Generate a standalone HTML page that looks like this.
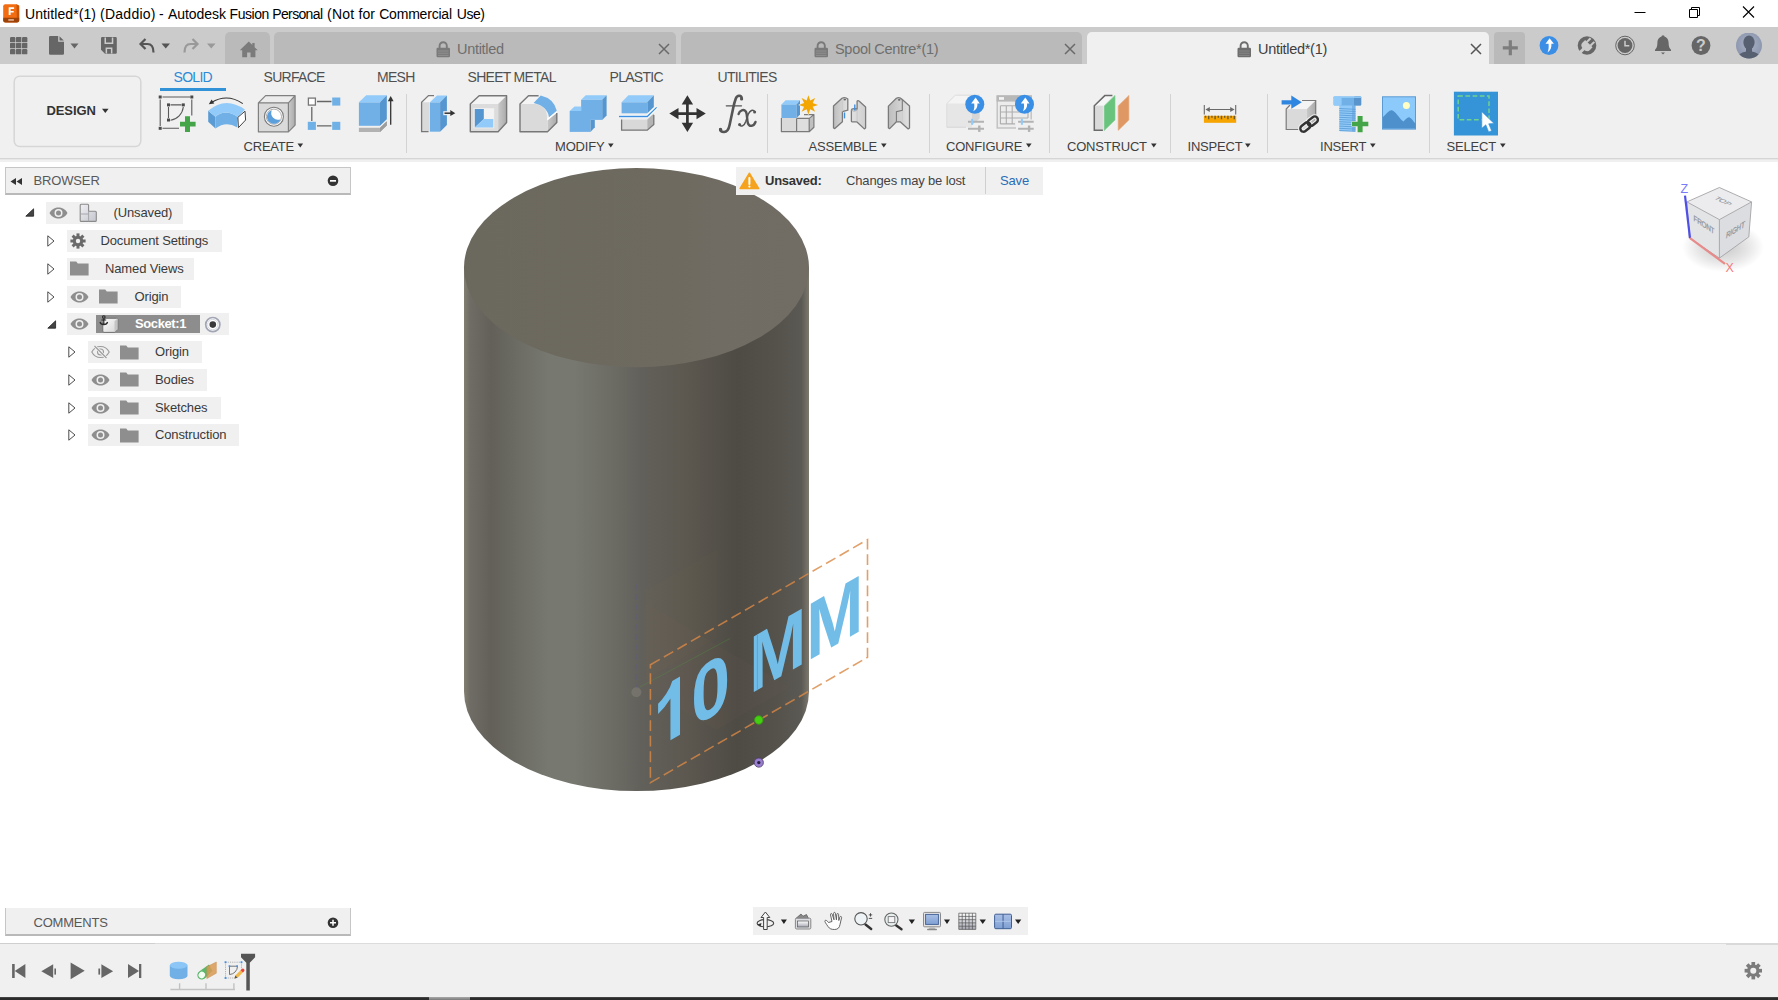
<!DOCTYPE html>
<html><head><meta charset="utf-8">
<style>
*{box-sizing:border-box;margin:0;padding:0}
html,body{width:1778px;height:1000px;overflow:hidden;background:#fff;font-family:"Liberation Sans",sans-serif;}
.abs{position:absolute}
#titlebar{position:absolute;left:0;top:0;width:1778px;height:27px;background:#fff}
#title{position:absolute;left:25px;top:6px;font-size:14px;color:#000;white-space:nowrap}
#title span{position:absolute;top:0;white-space:nowrap}
#tabbar{position:absolute;left:0;top:27px;width:1778px;height:37px;background:#cbcbcb}
.tab{position:absolute;top:4.500px;height:32.500px;border-radius:5px 5px 0 0;background:#bababa;font-size:14px;color:#6b6b6b;white-space:nowrap}
.tab.active{background:#f0f0f0;color:#3c3c3c}
#toolbar{position:absolute;left:0;top:64px;width:1778px;height:98px;background:#f0f0f0}
#toolbar .line{position:absolute;left:0;top:94px;width:1778px;height:2px;background:linear-gradient(#d5d5d5 0,#d5d5d5 1px,#e7e7e7 1px,#e7e7e7 2px)}
.wtab{position:absolute;top:4.500px;font-size:14px;color:#505050;white-space:nowrap;letter-spacing:-0.700px}
.glabel{position:absolute;top:75px;font-size:13px;color:#3f3f3f;white-space:nowrap;letter-spacing:-0.2px}
.sep{position:absolute;top:30px;width:1px;height:59px;background:#d3d3d3}
#canvas{position:absolute;left:0;top:162px;width:1778px;height:781px;background:#fff}
.panelhdr{position:absolute;left:5px;width:346px;height:28px;background:#f0f0f0;border:1px solid #c6c6c6;border-bottom:2px solid #b9b9b9;font-size:13px;color:#4a4a4a}
.row{position:absolute;height:24px;background:#f0f0f0;font-size:13px;color:#333;white-space:nowrap}
#timeline{position:absolute;left:0;top:943px;width:1778px;height:54px;background:#f0f0f0;border-top:1px solid #dcdcdc}
#bottombar{position:absolute;left:0;top:997px;width:1778px;height:3px;background:linear-gradient(#5a5a5a 0,#2b2b2b 1px,#2b2b2b 3px)}
.ttxt{top:13.500px;font-size:14.500px;white-space:nowrap;letter-spacing:-0.300px}
.rtxt{font-size:13px;white-space:nowrap;letter-spacing:-0.130px}
.btxt{top:11px;font-size:13px;white-space:nowrap;letter-spacing:-0.150px}
</style></head><body>
<div id="titlebar">
  <svg class="abs" style="left:3px;top:3.500px" width="17" height="19" viewBox="0 0 17 19"><path d="M2.300 0.200H13.500L16.200 1.800V16.200Q16.200 18.400 14 18.400H2.400Q0.200 18.400 0.200 16.200V2.300Q0.200 0.200 2.300 0.200z" fill="#f26d12"/><path d="M13.500 0.200L16.200 1.800V16L13.800 14z" fill="#c95408"/><path d="M0.200 13.800H16.200V16.200Q16.200 18.400 14 18.400H2.400Q0.200 18.400 0.200 16.200z" fill="#9e4208"/><path d="M5.700 3.200h5.400v1.700h-3.500v2h3.100v1.600h-3.100v2.400h-1.900z" fill="#fff"/><rect x="5.300" y="15.200" width="5.600" height="1.500" fill="#e8c0a4"/></svg>
  <div id="title"><span style="left:-0.0px;letter-spacing:0.09px">Untitled*(1)</span><span style="left:75.1px;letter-spacing:0.24px">(Daddio)</span><span style="left:134.1px;letter-spacing:0.73px">-</span><span style="left:143.0px;letter-spacing:-0.06px">Autodesk</span><span style="left:204.6px;letter-spacing:-0.47px">Fusion</span><span style="left:247.3px;letter-spacing:-0.65px">Personal</span><span style="left:302.1px;letter-spacing:0.21px">(Not</span><span style="left:333.6px;letter-spacing:0.05px">for</span><span style="left:354.2px;letter-spacing:-0.20px">Commercial</span><span style="left:431.8px;letter-spacing:-0.49px">Use)</span></div>
  <svg class="abs" style="left:1630px;top:2px" width="130" height="22" viewBox="0 0 130 22"><path d="M4.500 10.500h11" stroke="#000" stroke-width="1" fill="none"/><path d="M59.500 7.500h8v8h-8z M61.500 7.500v-2h8v8h-2" stroke="#000" stroke-width="1" fill="none"/><path d="M113 4.500l11 11M124 4.500l-11 11" stroke="#000" stroke-width="1.100" fill="none"/></svg>
</div>
<div id="tabbar">
<svg class="abs" style="left:10px;top:10px" width="18" height="18" viewBox="0 0 18 18" fill="#666"><rect x="0" y="0" width="5.350" height="5.350" rx="1.200"/><rect x="6" y="0" width="5.350" height="5.350" rx="0.500"/><rect x="12" y="0" width="5.350" height="5.350" rx="1.200"/><rect x="0" y="6" width="5.350" height="5.350" rx="0.500"/><rect x="6" y="6" width="5.350" height="5.350" rx="0.500"/><rect x="12" y="6" width="5.350" height="5.350" rx="0.500"/><rect x="0" y="12" width="5.350" height="5.350" rx="1.200"/><rect x="6" y="12" width="5.350" height="5.350" rx="0.500"/><rect x="12" y="12" width="5.350" height="5.350" rx="1.200"/></svg>
<svg class="abs" style="left:49px;top:9px" width="32" height="20" viewBox="0 0 32 20"><path d="M1.200 0h8v5.800h5.800v11.700a1.200 1.200 0 0 1-1.200 1.200h-12.600a1.200 1.200 0 0 1-1.200-1.200v-16.300a1.200 1.200 0 0 1 1.200-1.200z" fill="#666"/><path d="M10.500 0.300l4.300 4.300h-4.300z" fill="#666"/><path d="M21.500 7.500h8l-4 5z" fill="#666"/></svg>
<svg class="abs" style="left:101px;top:10px" width="17" height="17" viewBox="0 0 17 17"><path d="M1.200 0h13.400a1.200 1.200 0 0 1 1.200 1.200v14.300a1.200 1.200 0 0 1-1.200 1.200h-10.600l-4-4v-11.500a1.200 1.200 0 0 1 1.200-1.200z" fill="#666"/><path d="M3.500 0.500v6.500h8.800v-6.500h-1.500v4.900h-5.800v-4.900z" fill="#cbcbcb"/><path d="M4.600 16.500v-6h6.800v6h-1.500v-4.400h-3.800v4.400z" fill="#cbcbcb"/></svg>
<svg class="abs" style="left:138px;top:10px" width="34" height="18" viewBox="0 0 34 18"><path d="M7.500 2L2.500 7l5 5" fill="none" stroke="#555" stroke-width="2.200" stroke-linejoin="miter"/><path d="M3 7h6.500q6 0 6 8.500" fill="none" stroke="#555" stroke-width="2.200"/><path d="M23.500 6.500h8.500l-4.250 5z" fill="#555"/></svg>
<svg class="abs" style="left:183px;top:10px" width="34" height="18" viewBox="0 0 34 18"><path d="M9.500 2l5 5l-5 5" fill="none" stroke="#999" stroke-width="2.200"/><path d="M14 7h-6.500q-6 0-6 8.500" fill="none" stroke="#999" stroke-width="2.200"/><path d="M24 6.500h8.500l-4.250 5z" fill="#999"/></svg>
<div class="tab" style="left:225px;width:45px"><svg class="abs" style="left:14px;top:9px" width="20" height="17" viewBox="0 0 20 17"><path d="M9.800 0.500L0.800 9.300h2.400v6.900h4.900v-4.800h3.400v4.800h4.900v-6.900h2.400l-3.200-3.100v-4.200h-2.300v2z" fill="#7b7b7b"/></svg></div>
<div class="tab" style="left:274px;width:402px"></div>
<div class="tab" style="left:680.500px;width:401.500px"></div>
<div class="tab active" style="left:1087px;width:402px"></div>
<div class="tab" style="left:1494px;width:31px;border-radius:4px 4px 0 0"><svg class="abs" style="left:8px;top:8px" width="16" height="16" viewBox="0 0 16 16"><path d="M8.300 0.300v15M0.800 7.800h15" stroke="#7d7d7d" stroke-width="3.200"/></svg></div>
<svg class="abs" style="left:436px;top:13.500px" width="15" height="17" viewBox="0 0 15 17"><path d="M3.600 7.500V4.800a3.600 3.600 0 0 1 7.200 0V7.500" fill="none" stroke="#7a7a7a" stroke-width="1.900"/><rect x="0.500" y="6.800" width="13.500" height="9.500" rx="1.200" fill="#7a7a7a"/><path d="M2 10h10.500M2 12.200h10.500M2 14.400h10.500" stroke="#fff" stroke-opacity="0.220" stroke-width="0.800"/></svg><svg class="abs" style="left:657.5px;top:15.500px" width="12" height="12" viewBox="0 0 12 12"><path d="M1 1l10 10M11 1L1 11" stroke="#6a6a6a" stroke-width="1.500" fill="none"/></svg><div class="abs ttxt" style="left:457px;color:#6e6e6e">Untitled</div><svg class="abs" style="left:814px;top:13.500px" width="15" height="17" viewBox="0 0 15 17"><path d="M3.600 7.500V4.800a3.600 3.600 0 0 1 7.200 0V7.500" fill="none" stroke="#7a7a7a" stroke-width="1.900"/><rect x="0.500" y="6.800" width="13.500" height="9.500" rx="1.200" fill="#7a7a7a"/><path d="M2 10h10.500M2 12.200h10.500M2 14.400h10.500" stroke="#fff" stroke-opacity="0.220" stroke-width="0.800"/></svg><svg class="abs" style="left:1064px;top:15.500px" width="12" height="12" viewBox="0 0 12 12"><path d="M1 1l10 10M11 1L1 11" stroke="#6a6a6a" stroke-width="1.500" fill="none"/></svg><div class="abs ttxt" style="left:835px;color:#6e6e6e">Spool Centre*(1)</div><svg class="abs" style="left:1237px;top:13.500px" width="15" height="17" viewBox="0 0 15 17"><path d="M3.600 7.500V4.800a3.600 3.600 0 0 1 7.200 0V7.500" fill="none" stroke="#6e6e6e" stroke-width="1.900"/><rect x="0.500" y="6.800" width="13.500" height="9.500" rx="1.200" fill="#6e6e6e"/><path d="M2 10h10.500M2 12.200h10.500M2 14.400h10.500" stroke="#fff" stroke-opacity="0.220" stroke-width="0.800"/></svg><svg class="abs" style="left:1469.5px;top:15.500px" width="12" height="12" viewBox="0 0 12 12"><path d="M1 1l10 10M11 1L1 11" stroke="#555" stroke-width="1.500" fill="none"/></svg><div class="abs ttxt" style="left:1258px;color:#3e3e3e">Untitled*(1)</div>
<svg class="abs" style="left:1536px;top:5.500px" width="236" height="28" viewBox="0 0 236 28">
<circle cx="13" cy="12.500" r="9.400" fill="#3a8ee6"/><path d="M13.600 5.300l4.300 5.500h-2.500c0.200 3.800-0.700 6.600-3.900 8.800c1.200-2.800 1.300-5.200 1.100-8.800h-3.100z" fill="#fff"/>
<circle cx="51" cy="12.500" r="9.300" fill="#666"/>
<g transform="translate(51.300 12.200) rotate(45) scale(1.220)" fill="#cbcbcb"><path d="M-4.300 -1.800H4.300V1.200Q4.300 4.600 0 4.600Q-4.300 4.600 -4.300 1.200z"/><rect x="-3" y="-6" width="1.700" height="4.600"/><rect x="1.300" y="-6" width="1.700" height="4.600"/><rect x="-1.200" y="4" width="2.400" height="7"/></g>
<circle cx="89" cy="12.500" r="9.300" fill="none" stroke="#666" stroke-width="1"/><circle cx="89" cy="12.500" r="7.400" fill="#666"/><path d="M89 7.800v5h4.300" fill="none" stroke="#cbcbcb" stroke-width="1.500"/>
<path d="M127 3.500c-4 0-5.600 3.200-5.600 6.500c0 4-1.200 5.500-2.400 6.800v1.200h16v-1.200c-1.200-1.300-2.400-2.800-2.400-6.800c0-3.300-1.600-6.500-5.600-6.500z" fill="#666"/><circle cx="127" cy="3.800" r="1.600" fill="#666"/><path d="M125 19.500h4l-2 2z" fill="#666"/>
<circle cx="165" cy="12.500" r="9.400" fill="#666"/><text x="165" y="18.300" text-anchor="middle" font-family="Liberation Sans" font-weight="bold" font-size="16" fill="#cbcbcb">?</text>
<defs><radialGradient id="av" cx="0.500" cy="0.450" r="0.600"><stop offset="0" stop-color="#aab3c6"/><stop offset="1" stop-color="#8892ab"/></radialGradient><clipPath id="avc"><circle cx="213" cy="12.500" r="13"/></clipPath></defs>
<circle cx="213" cy="12.500" r="13" fill="url(#av)"/><g clip-path="url(#avc)" fill="#566070"><ellipse cx="213" cy="9.500" rx="5.600" ry="7"/><path d="M201 27c0-6 5-7.500 9-8.500h6c4 1 9 2.500 9 8.500z"/><rect x="210" y="14" width="6" height="6"/></g>
</svg>
</div>
<div id="toolbar"><div class="line"></div>
<svg class="abs" style="left:12px;top:10px" width="132" height="76" viewBox="0 0 132 76"><rect x="2.200" y="2.200" width="126.600" height="70.400" rx="5.500" fill="#f0f0f0" stroke="#d6d6d6" stroke-width="1.500"/></svg>
<div class="abs" style="left:46.500px;top:38.500px;font-size:13px;font-weight:bold;color:#333;letter-spacing:-0.100px">DESIGN</div>
<svg class="abs" style="left:101px;top:44px" width="9" height="6"><path d="M1 0.800h6.600l-3.300 4.200z" fill="#333"/></svg>
<div class="wtab" style="left:173.500px;color:#2e8ad6">SOLID</div>
<div class="abs" style="left:160px;top:23.500px;width:66px;height:3px;background:#3292d8"></div>
<div class="wtab" style="left:263.500px">SURFACE</div>
<div class="wtab" style="left:377px">MESH</div>
<div class="wtab" style="left:467.500px">SHEET METAL</div>
<div class="wtab" style="left:609.500px">PLASTIC</div>
<div class="wtab" style="left:717.500px">UTILITIES</div>
<div class="sep" style="left:406px"></div><div class="sep" style="left:767px"></div><div class="sep" style="left:929px"></div><div class="sep" style="left:1049px"></div><div class="sep" style="left:1170px"></div><div class="sep" style="left:1267px"></div><div class="sep" style="left:1429px"></div>
<div class="glabel" style="left:243.500px">CREATE</div>
<div class="glabel" style="left:555px">MODIFY</div>
<div class="glabel" style="left:808.500px">ASSEMBLE</div>
<div class="glabel" style="left:946px">CONFIGURE</div>
<div class="glabel" style="left:1067px">CONSTRUCT</div>
<div class="glabel" style="left:1187.500px">INSPECT</div>
<div class="glabel" style="left:1320px">INSERT</div>
<div class="glabel" style="left:1446.500px">SELECT</div>
<svg class="abs" style="left:0;top:24px" width="1778" height="74" viewBox="0 88 1778 74">
<g fill="#333"><path d="M297.500 143.500h5.600l-2.800 4z"/><path d="M608 143.500h5.600l-2.800 4z"/><path d="M881 143.500h5.600l-2.800 4z"/><path d="M1026 143.500h5.600l-2.800 4z"/><path d="M1151 143.500h5.600l-2.800 4z"/><path d="M1245 143.500h5.600l-2.800 4z"/><path d="M1370 143.500h5.600l-2.800 4z"/><path d="M1500 143.500h5.600l-2.800 4z"/></g>
<!-- ICONS1 -->
<defs>
<linearGradient id="gR" x1="0" y1="0" x2="1" y2="0"><stop offset="0" stop-color="#c9c9c9"/><stop offset="1" stop-color="#aaaaaa"/></linearGradient>
<linearGradient id="gF" x1="0" y1="0" x2="0" y2="1"><stop offset="0" stop-color="#dedede"/><stop offset="1" stop-color="#d6d6d6"/></linearGradient>
</defs>
<!-- 1 sketch -->
<g stroke="#5a5a5a" stroke-width="1.100" fill="none"><path d="M162.500 97h27.500M160.200 99.500v26.500M191.800 99.500v16M162.500 128.300h16.500"/><path d="M170.500 104.900h11M168.500 107v11"/><path d="M183.300 107a15 15 0 0 1-12.800 13.200"/></g>
<g fill="#4a4a4a"><rect x="158.700" y="95.500" width="3" height="3"/><rect x="190.300" y="95.500" width="3" height="3"/><rect x="158.700" y="126.800" width="3" height="3"/><rect x="167" y="103.400" width="3" height="3"/><rect x="181.800" y="103.400" width="3" height="3"/><rect x="167" y="118.500" width="3" height="3"/></g>
<path d="M185 116.300h5v5.500h5.600v4.600h-5.600v5.600h-5v-5.600h-5v-4.600h5z" fill="#43a547"/>
<!-- 2 revolve -->
<path d="M208.200 110.800L215.400 116.700V128.500L208.200 121.800z" fill="#5a9bd4"/>
<path d="M215.400 116.700Q226 108.100 237.800 117.100L237 127.200Q226 120.500 215.400 128.500z" fill="#70b0e6"/>
<path d="M208.200 110.800Q225.400 95.800 245 109.500L237.800 117.100Q226 108.100 215.400 116.700z" fill="#92cbf9"/>
<path d="M245 111.200L245.600 120L238.400 127.700L237.900 117.300z" fill="#fff" stroke="#444" stroke-width="1"/>
<path d="M242.800 103.600Q227 93 211.500 102.500" fill="none" stroke="#333" stroke-width="1.100"/><path d="M208.800 104.300L211.600 99.600L214.300 103.400z" fill="#333"/>
<!-- 3 hole -->
<path d="M258.400 102.800L265.600 95.600H295.100L288.400 102.800z" fill="#ececec"/>
<path d="M288.400 102.800L295.100 95.600V125.100L288.400 131.900z" fill="url(#gR)"/>
<rect x="258.400" y="102.800" width="30" height="29.100" fill="#dadada"/>
<path d="M258.400 131.900V102.800L265.600 95.600H295.100V125.100L288.400 131.900zM258.400 102.800H288.400M288.400 131.900V102.800L295.100 95.600" fill="none" stroke="#808080" stroke-width="1.200" stroke-linejoin="round"/>
<circle cx="273.900" cy="116.700" r="9.500" fill="#fff" stroke="#7a7a7a" stroke-width="1.100"/>
<circle cx="273.900" cy="116.700" r="7.600" fill="none" stroke="#9a9a9a" stroke-width="0.800"/><path d="M271.800 110.200A7 7 0 1 0 280.600 119.200A6.800 6.800 0 0 1 271.800 110.200z" fill="#5b9fdc"/>
<!-- 4 pattern -->
<g stroke="#666" stroke-width="1.300"><path d="M317 101.500h14.500M311.800 107v14M317 125.800h14.500"/></g>
<rect x="308.400" y="98.100" width="7" height="7" fill="#fff" stroke="#777" stroke-width="1.300"/>
<rect x="332.200" y="97.500" width="8.100" height="8.100" fill="#6fb1e6"/><rect x="307.800" y="121.800" width="8.100" height="8.100" fill="#6fb1e6"/><rect x="332.200" y="121.800" width="8.100" height="8.100" fill="#6fb1e6"/>
<!-- 5 extrude -->
<path d="M358.900 127.700H380L386.800 121.300V125.500L380 131.900H358.900z" fill="#b2b2b2"/><path d="M380 127.700L386.800 121.300V125.500L380 131.900z" fill="#9c9c9c"/>
<rect x="358.900" y="102.300" width="21.100" height="23.500" fill="#70b0e6"/>
<path d="M358.900 102.300L366.200 95.200H386.800L380 102.300z" fill="#92cbf9"/>
<path d="M380 102.300L386.800 95.200V119.200L380 125.800z" fill="#5595d0"/>
<path d="M390.700 124.700V100.500" stroke="#333" stroke-width="1.300"/><path d="M390.700 96L393.600 101.200H387.800z" fill="#333"/>
<!-- 6 press pull -->
<path d="M421.600 102.300L428.500 95.600H434L430 102.300z" fill="#f6f6f6"/><rect x="421.600" y="102.300" width="8" height="29.400" fill="#dadada"/>
<path d="M428.500 131.700H421.600V102.300L428.500 95.600H434" fill="none" stroke="#777" stroke-width="1.300"/>
<rect x="430" y="102.300" width="10.100" height="29.400" fill="#70b0e6"/>
<path d="M430 102.300L437 95.600H446.900L440.100 102.300z" fill="#92cbf9"/>
<path d="M440.100 102.300L446.900 95.600V125L440.100 131.700z" fill="#5595d0"/>
<rect x="443.300" y="111.200" width="4" height="4" fill="#f0f0f0"/><path d="M444.500 113.200H451" stroke="#333" stroke-width="1.500"/><path d="M455.300 113.200L450.300 110.100V116z" fill="#333"/>
<!-- 7 shell -->
<path d="M470.300 104L479.100 95.800H506.600L498.100 104z" fill="#f4f4f4"/>
<path d="M498.100 104L506.600 95.800V122.600L498.100 131.700z" fill="url(#gR)"/>
<rect x="470.300" y="104" width="27.800" height="27.700" fill="#dcdcdc"/>
<rect x="473.400" y="108" width="20.800" height="20.400" fill="#ededed"/>
<rect x="484" y="109" width="9.600" height="10" fill="#f3f3f3"/>
<path d="M474.800 109H483.800V119L474.800 127.400z" fill="#5595d0"/><path d="M483.800 119H493.200V127.400H474.800z" fill="#92cbf9"/>
<path d="M470.300 131.700V104L479.100 95.800H506.600V122.600L498.100 131.700z" fill="none" stroke="#777" stroke-width="1.400" stroke-linejoin="round"/>
<!-- 8 fillet -->
<path d="M520 104L528.500 95.800H540.700L535.700 104z" fill="#f4f4f4"/>
<path d="M520 104H535.700Q547 106 547 117.500V131.700H520z" fill="#dadada"/>
<path d="M547.500 120.500L556.800 112.900V122.600L547.500 131.700z" fill="url(#gR)"/>
<path d="M533.600 103L540.700 95.400Q554 98.500 556.800 110.800L549.200 118Q547.500 106 533.600 103z" fill="#70b0e6"/>
<path d="M547.200 119.500L556.800 111.800" stroke="#fff" stroke-width="1.200" fill="none"/>
<path d="M538.600 95.800H528.500L520 104V131.700H547.500L556.800 122.600V113" fill="none" stroke="#777" stroke-width="1.400" stroke-linejoin="round"/>
<!-- 9 combine -->
<path d="M581.100 99.800L585.700 95.200H606.600L602.200 99.800z" fill="#92cbf9"/><path d="M602.200 99.800L606.600 95.200V115.400L602.200 119.900z" fill="#5595d0"/>
<rect x="581.100" y="99.800" width="21.100" height="20.100" fill="#70b0e6"/>
<path d="M569.700 111L574.500 106.600H581.100V111z" fill="#92cbf9"/>
<rect x="569.700" y="111" width="20.800" height="20.900" fill="#70b0e6"/>
<path d="M590.500 119.900H594.800V127.200L590.500 131.900z" fill="#5595d0"/>
<!-- 10 split -->
<path d="M621.600 102.300L628.400 95.200H653.800L647.300 102.300z" fill="#92cbf9"/><path d="M647.300 102.300L653.800 95.200V107L647.300 113.300z" fill="#5595d0"/>
<rect x="621.600" y="102.300" width="25.700" height="11" fill="#70b0e6"/>
<rect x="621.600" y="119.600" width="25.700" height="10.600" fill="#d8d8d8"/><path d="M647.300 119.600L653.800 113.500V124.500L647.300 130.200z" fill="#b4b4b4"/>
<path d="M621.600 119.600V130.200H647.300L653.800 124.500V115" fill="none" stroke="#777" stroke-width="1.300"/>
<path d="M619 116.500H647.300L656.600 107.400" fill="none" stroke="#fff" stroke-width="3"/><path d="M619 116.500H647.300L656.600 107.400" fill="none" stroke="#3d8fe0" stroke-width="1.300"/>
<!-- 11 move -->
<path d="M687.400 100V127M674 113.600H701" stroke="#333" stroke-width="2.700"/>
<path d="M687.400 95.200L693.100 104.500H681.700zM687.400 131.900L693.100 122.700H681.700zM669.300 113.600L678.500 107.900V119.300zM705.800 113.600L696.500 107.900V119.300z" fill="#333"/>
<!-- 12 fx -->
<g fill="none" stroke="#555" stroke-linecap="round">
<path d="M741.800 98.600C741.500 95.200 737.300 94.600 735.800 98.500C734.500 102 733.800 105 733.200 108L729.600 125C728.800 129 727 132.200 723.800 132C721.500 131.800 720 130.800 720.200 129.300" stroke-width="2.600"/>
<path d="M726.300 105.800H741.500" stroke-width="1.300"/>
<path d="M738.600 114C739.500 110.300 743.800 108.800 745.800 111.500C747.600 114 746.600 120 748 123.500C749.400 127 753.800 126.600 755.500 122" stroke-width="2.400"/>
<path d="M754.800 111.600C753 109 750 110.200 748.200 114.300L745.800 121.500C744.300 125.600 741.500 127.300 739.200 125" stroke-width="1.500"/>
</g><circle cx="741.600" cy="99" r="1.600" fill="#555"/><circle cx="720.600" cy="129.400" r="1.600" fill="#555"/><circle cx="754.600" cy="112" r="1.500" fill="#555"/><circle cx="739.600" cy="124.600" r="1.500" fill="#555"/>

<!-- /ICONS1 -->
<!-- ICONS2 -->
<defs>
<linearGradient id="gH" x1="0" y1="0" x2="1" y2="0"><stop offset="0" stop-color="#bdbdbd"/><stop offset="1" stop-color="#e2e2e2"/></linearGradient>
<linearGradient id="gH2" x1="0" y1="0" x2="1" y2="0"><stop offset="0" stop-color="#e2e2e2"/><stop offset="1" stop-color="#cfcfcf"/></linearGradient>
<g id="upc"><circle cx="0" cy="0" r="9.500" fill="#398ee6"/><path d="M0.800 -6.800L5 -0.800H2.600C2.800 2.800 1.800 5.200 -1.600 7C-0.400 4.500 -0.300 2.500 -0.600 -0.800H-3.600z" fill="#fff"/></g>
</defs>
<!-- 13 new component -->
<rect x="781.400" y="118" width="15.200" height="13.700" fill="#dadada"/>
<path d="M796.600 118.400L800 114.600H813.900L809.200 118.400z" fill="#f0f0f0"/><rect x="796.600" y="118.400" width="12.600" height="13.300" fill="#dedede"/><path d="M809.200 118.400L813.900 114.600V127.200L809.200 131.700z" fill="#c0c0c0"/>
<path d="M781.400 118V131.700H809.200L813.900 127.200V114.600H804M796.600 118.400V131.700M809.200 131.700V118.400H796.600M809.200 118.400L813.900 114.600" fill="none" stroke="#7a7a7a" stroke-width="1.200" stroke-linejoin="round"/>
<path d="M781.400 104.500L785.600 100.200H800L796.600 104.500z" fill="#92cbf9"/><rect x="781.400" y="104.500" width="15.200" height="13.500" fill="#70b0e6"/><path d="M796.600 104.500L800 100.200V114.600L796.600 118z" fill="#5595d0"/>
<path d="M808.4 95.3L810.2 100.6L815.2 98.1L812.7 103.1L818.0 104.9L812.7 106.7L815.2 111.7L810.2 109.2L808.4 114.5L806.6 109.2L801.6 111.7L804.1 106.7L798.8 104.9L804.1 103.1L801.6 98.1L806.6 100.6z" fill="#f4a600" stroke="#f0f0f0" stroke-width="0.800" paint-order="stroke"/>
<!-- 14 joint -->
<path d="M833.500 128V106.100L842 98.300Q845 96.500 847.800 99V110.200L842.400 111.600V121.800L834.800 128.600z" fill="url(#gH)" stroke="#7a7a7a" stroke-width="1.300" stroke-linejoin="round"/>
<path d="M842.400 100.500V111.600" stroke="#c8c8c8" stroke-width="0.800"/><ellipse cx="844.800" cy="99.600" rx="1.300" ry="0.900" fill="#666"/>
<path d="M844.500 112.500V118.400" stroke="#3d8fe0" stroke-width="1.400"/>
<path d="M857.100 109V101.200Q858 100 859 101L865.600 107V128L864.300 128.900L856.700 121.800H852Q851.400 121.800 851.400 121V110.500Q851.400 108.700 854.200 108.700z" fill="url(#gH2)" stroke="#7a7a7a" stroke-width="1.300" stroke-linejoin="round"/>
<path d="M851.400 110.300Q854.200 112.200 857.100 110.300" fill="none" stroke="#aaa" stroke-width="0.800"/><path d="M857.100 110V121.500" stroke="#c4c4c4" stroke-width="0.800"/>
<path d="M854.800 104.500V110.500" stroke="#3d8fe0" stroke-width="1.400"/>
<!-- 15 as-built -->
<path d="M888.400 128V106.100L896.400 98.300Q899.300 96.500 902.300 99.500L909.500 106.100V128L908.200 128.900L900.200 121.800H896.400L889.700 128.600z" fill="url(#gH)" stroke="#7a7a7a" stroke-width="1.300" stroke-linejoin="round"/>
<path d="M902.300 99.500V110.200L896.400 111.600V121.800" fill="none" stroke="#7a7a7a" stroke-width="1.100"/><path d="M902.300 111V121.500" stroke="#c8c8c8" stroke-width="0.800"/><ellipse cx="899.200" cy="99.800" rx="1.300" ry="0.900" fill="#666"/>
<!-- 16 configure -->
<path d="M946.800 103.600L955.300 95.200H979.700L972 103.600z" fill="#f4f4f4"/><rect x="946.800" y="103.600" width="25.200" height="23.600" fill="#e6e6e6"/><path d="M972 103.600L979.700 95.200V118.400L972 125z" fill="#d6d6d6"/>
<path d="M946.800 127.200V103.600L955.300 95.200H979.700" fill="none" stroke="#dcdcdc" stroke-width="1"/><path d="M946.800 127.200H966" stroke="#d4d4d4" stroke-width="1"/>
<use href="#upc" x="974.800" y="104.200"/>
<path d="M968 121.800H984M968 128.800H984" stroke="#b2b2b2" stroke-width="2"/><path d="M972.100 118.800V124.800" stroke="#92cbf9" stroke-width="2"/><path d="M979.300 125.500V131.900" stroke="#b2b2b2" stroke-width="2.400"/>
<!-- 17 configure table -->
<rect x="997.200" y="96" width="34" height="32" fill="#ececec" stroke="#c0c0c0" stroke-width="1.400"/><rect x="996.600" y="95.400" width="35.200" height="6.200" fill="#b8b8b8"/><rect x="999" y="97.100" width="5" height="2.700" fill="#f4f4f4"/>
<path d="M1000.400 105.700H1028M1000.400 112H1028M1000.400 118H1028M1000.400 123.900H1015M1000.400 105.700V123.900M1006.300 105.700V123.900M1012.200 105.700V123.900M1028 105.700V118" fill="none" stroke="#adadad" stroke-width="1.100"/>
<rect x="1016" y="119.500" width="18" height="13" fill="#f0f0f0"/>
<use href="#upc" x="1024.500" y="104.200"/>
<path d="M1018.100 121.800H1033.700M1018.100 128.800H1033.700" stroke="#b2b2b2" stroke-width="2"/><path d="M1021.900 118.800V124.800" stroke="#92cbf9" stroke-width="2"/><path d="M1029.100 125.500V131.900" stroke="#b2b2b2" stroke-width="2.400"/>
<!-- 18 construct -->
<path d="M1094.300 105.700L1104.800 95.600H1112.400L1102.900 105.700z" fill="#f6f6f6"/><rect x="1094.300" y="105.700" width="8.600" height="24.500" fill="#dadada"/>
<path d="M1102.900 130.200H1094.300V105.700L1104.800 95.600H1112.400" fill="none" stroke="#6a6a6a" stroke-width="1.500"/>
<path d="M1104.200 106.100L1115 95.400V119.900L1104.200 130.600z" fill="#68c47d" stroke="#7fcd90" stroke-width="0.600"/>
<path d="M1118.200 105.900L1128.900 95.400V119.900L1118.200 130.400z" fill="#df9864" stroke="#e5a77a" stroke-width="0.600"/>
<!-- 19 inspect -->
<path d="M1204.300 104.900V114.600M1235.700 104.900V114.600M1208 109.500H1232" stroke="#6a6a6a" stroke-width="1.100" fill="none"/><path d="M1205.400 109.500L1209.800 107V112zM1234.600 109.500L1230.200 107V112z" fill="#6a6a6a"/>
<rect x="1203.900" y="115.800" width="32.300" height="7" fill="#f5a400"/>
<path d="M1205.500 115.800v2M1208.700 115.800v3.400M1211.900 115.800v2M1215.100 115.800v3.400M1218.300 115.800v2M1221.500 115.800v3.400M1224.700 115.800v2M1227.900 115.800v3.400M1231.100 115.800v2M1234.300 115.800v3.400" stroke="#6e5c30" stroke-width="1.400"/>
<!-- 20 insert derive -->
<path d="M1286.200 109.100L1294.600 100.500H1315.700L1306.900 109.100z" fill="#f4f4f4"/><rect x="1286.200" y="109.100" width="20.700" height="20.400" fill="#dadada"/><path d="M1306.900 109.100L1315.700 100.500V120.900L1306.900 129.500z" fill="url(#gR)"/>
<path d="M1301 129.500H1286.200V109.100L1290 105M1302 100.500H1315.700V116" fill="none" stroke="#7a7a7a" stroke-width="1.200"/>
<path d="M1281.600 100.200H1291.300V95.400L1301.800 102.200L1291.300 108.700V104.500H1281.600z" fill="#2f86e0" stroke="#f0f0f0" stroke-width="1" paint-order="stroke"/>
<g fill="none">
<g transform="rotate(-38 1305.4 127.0)"><rect x="1299.80" y="123.80" width="11.2" height="6.4" rx="3.2" stroke="#f0f0f0" stroke-width="4.6"/></g>
<g transform="rotate(-38 1312.8 121.2)"><rect x="1307.20" y="118.00" width="11.2" height="6.4" rx="3.2" stroke="#f0f0f0" stroke-width="4.6"/></g>
<g transform="rotate(-38 1305.4 127.0)"><rect x="1299.80" y="123.80" width="11.2" height="6.4" rx="3.2" stroke="#333" stroke-width="2.4"/></g>
<g transform="rotate(-38 1312.8 121.2)"><rect x="1307.20" y="118.00" width="11.2" height="6.4" rx="3.2" stroke="#333" stroke-width="2.4"/></g>
</g>
<!-- 21 bolt -->
<rect x="1339.300" y="105" width="16.200" height="26.200" rx="1" fill="#92cbf9"/><path d="M1339.300 108.500h16.200M1339.300 110.700h16.200M1339.300 112.900h16.200M1339.300 115.100h16.200M1339.300 117.300h16.200M1339.300 119.500h16.200M1339.300 121.700h16.200M1339.300 123.900h16.200M1339.300 126.100h16.200M1339.300 128.300h16.200M1339.300 130.500h16.200" stroke="#5f9fd8" stroke-width="0.900" transform="skewY(3) translate(0 -70.200)"/>
<rect x="1352" y="105" width="3.500" height="26.200" fill="#5f9fd8" fill-opacity="0.550"/>
<rect x="1333.600" y="96.600" width="27.600" height="8.800" rx="1" fill="#70b0e6"/><rect x="1333.600" y="96.600" width="8" height="8.800" rx="1" fill="#92cbf9"/><rect x="1354" y="96.600" width="7.200" height="8.800" rx="1" fill="#5a94cc"/><rect x="1333.600" y="96.600" width="27.600" height="1.300" fill="#92cbf9"/>
<path d="M1357.600 116h5v5.800h5.700v4.400h-5.700v6.100h-5v-6.100h-5.700v-4.400h5.700z" fill="#43a547" stroke="#f0f0f0" stroke-width="1" paint-order="stroke"/>
<!-- 22 image -->
<rect x="1382.500" y="96.800" width="33" height="32.300" fill="#8dcafc" stroke="#5a9bd4" stroke-width="1"/>
<path d="M1383 117C1387 113 1389.500 109.800 1391.800 110.200C1395 110.600 1399 118 1403.500 121.600C1406 119 1408 117 1409.600 117.400C1411.600 118 1413.500 121.500 1415.500 123.500V128.600H1383z" fill="#4d90cc"/>
<circle cx="1406.400" cy="105.600" r="3.500" fill="#ffffc4"/>
<!-- 23 select -->
<rect x="1453.900" y="91.700" width="44.100" height="43.800" fill="#3593d8"/>
<rect x="1458.200" y="96" width="30.800" height="23.700" fill="none" stroke="#6fd28e" stroke-width="1.500" stroke-dasharray="4.700 2.500"/>
<path d="M1481.800 111.700V128.300L1485.800 124.800L1488.700 131.900L1491.600 130.700L1488.700 123.800L1494 123.400z" fill="#fff" stroke="#3593d8" stroke-width="0.600"/>

<!-- /ICONS2 -->
</svg>
</div>

<div id="canvas">
<svg class="abs" style="left:0;top:0" width="1778" height="781" viewBox="0 162 1778 781">
<defs>
<linearGradient id="cylS" x1="464" y1="0" x2="809" y2="0" gradientUnits="userSpaceOnUse">
<stop offset="0" stop-color="#827e72"/><stop offset="0.018" stop-color="#6e6c64"/><stop offset="0.08" stop-color="#626059"/><stop offset="0.17" stop-color="#6e6e66"/><stop offset="0.245" stop-color="#777870"/><stop offset="0.32" stop-color="#777870"/><stop offset="0.42" stop-color="#6d6d66"/><stop offset="0.515" stop-color="#62605a"/><stop offset="0.645" stop-color="#5c5850"/><stop offset="0.79" stop-color="#4e4b45"/><stop offset="0.905" stop-color="#55524c"/><stop offset="0.978" stop-color="#5b5953"/><stop offset="1" stop-color="#7c786e"/>
</linearGradient>
<linearGradient id="cylT" x1="464" y1="0" x2="809" y2="0" gradientUnits="userSpaceOnUse">
<stop offset="0" stop-color="#6b685e"/><stop offset="0.62" stop-color="#6e6a60"/><stop offset="0.74" stop-color="#706c63"/><stop offset="1" stop-color="#716d65"/>
</linearGradient>
<clipPath id="cylClip"><path d="M464 267.600V691.500A172.500 99.600 0 0 0 809 691.500V267.600A172.500 99.600 0 0 0 464 267.600z"/></clipPath>
</defs>
<!-- cylinder -->
<path d="M464 267.600V691.500A172.500 99.600 0 0 0 809 691.500V267.600z" fill="url(#cylS)"/>
<ellipse cx="636.500" cy="267.600" rx="172.500" ry="99.600" fill="url(#cylT)"/>
<!-- faint planes -->
<g clip-path="url(#cylClip)"><path d="M646 590L717.600 549.400V637.600L646 680z" fill="#c88a4a" fill-opacity="0.028"/><path d="M646 603L717 645L790 687L717 730L646 690z" fill="#c88a4a" fill-opacity="0.024"/></g>
<circle cx="636.400" cy="692.300" r="5" fill="#8a887f" fill-opacity="0.450"/>
<!-- sketch text -->
<path d="M640 687L730 638.500" stroke="#4f9a3a" stroke-opacity="0.300" stroke-width="1"/><path d="M636.400 584V688" stroke="#5a5ab0" stroke-opacity="0.220" stroke-width="1" stroke-dasharray="6 4"/>
<g id="sk">
<path d="M650.400 664.800L867.500 539.600V657.300L650.400 782.700z" fill="none" stroke="#d98845" stroke-opacity="0.800" stroke-width="1.600" stroke-dasharray="10.800 4.800"/>
<path transform="matrix(0.86 -0.4965 0 1 652.600 750.600)" d="M31.88 -0.00 L20.76 -0.00 L20.76 -41.88 Q14.67 -36.19 6.41 -33.46 L6.41 -43.55 Q10.76 -44.97 15.86 -48.94 Q20.96 -52.92 22.86 -58.22 L31.88 -58.22 Z" fill="#72bde8"/><text id="t10" transform="matrix(0.86 -0.4965 0 1 652.600 750.600)" x="45.040" font-family="Liberation Sans" font-weight="bold" font-size="81" fill="#72bde8">0</text>
<text id="tmm" transform="matrix(0.845 -0.488 0 1 749.200 694.800)" font-family="Liberation Sans" font-weight="bold" font-size="81" fill="#72bde8">MM</text>
<path d="M757.400 634.500V690.200" stroke="#5a9fd2" stroke-width="0.900"/>
<circle cx="758.800" cy="720" r="4.200" fill="#44d010" stroke="#3a9a18" stroke-width="1"/>
<circle cx="758.800" cy="762.600" r="4.600" fill="#9a7fd0" stroke="#4a3a6a" stroke-width="0.800"/><circle cx="758.800" cy="762.600" r="1.700" fill="#2a2040"/>
</g>
</svg>
<!-- BROWSER -->
<div class="panelhdr" style="top:5px"></div>
<svg class="abs" style="left:10px;top:14.500px" width="13" height="9" viewBox="0 0 13 9"><path d="M6 0.900V8.100L0.500 4.500zM12 0.900V8.100L6.500 4.500z" fill="#333"/></svg>
<div class="abs" style="left:33.500px;top:10.500px;font-size:13px;color:#585858;letter-spacing:-0.150px">BROWSER</div>
<svg class="abs" style="left:326.800px;top:13px" width="12" height="12" viewBox="0 0 12 12"><circle cx="6" cy="5.800" r="5.300" fill="#333"/><rect x="3" y="5" width="6" height="1.700" fill="#fff"/></svg>
<div class="row" style="left:46.1px;top:40px;width:137px;height:22px"></div><div class="abs rtxt" style="left:113.5px;top:43px;color:#3a3a3a;">(Unsaved)</div>
<svg class="abs" style="left:25.2px;top:46.4px" width="10" height="10" viewBox="0 0 10 10"><path d="M8.600 0.800V8.200H0.800z" fill="#444" stroke="#222" stroke-width="0.800" stroke-linejoin="round"/></svg>
<svg class="abs" style="left:48.7px;top:45px" width="19" height="12" viewBox="0 0 19 12"><path d="M0.500 6C3 1.800 6 0.500 9.500 0.500C13 0.500 16 1.800 18.500 6C16 10.200 13 11.500 9.500 11.500C6 11.500 3 10.200 0.500 6z" fill="#8e8e8e"/><circle cx="9.500" cy="6" r="4" fill="#f0f0f0"/><circle cx="9.500" cy="6" r="2.500" fill="#8e8e8e"/></svg>
<svg class="abs" style="left:79px;top:41px" width="19" height="20" viewBox="0 0 19 20"><defs><linearGradient id="cmpg" x1="0" y1="0" x2="1" y2="1"><stop offset="0" stop-color="#f0f0f4"/><stop offset="1" stop-color="#c4c6ce"/></linearGradient></defs><path d="M2.200 1.300H8.600Q9.600 1.300 9.600 2.300V8.300H16.300Q17.300 8.300 17.300 9.300V17.400Q17.300 18.400 16.300 18.400H2.200Q1.200 18.400 1.200 17.400V2.300Q1.200 1.300 2.200 1.300z" fill="url(#cmpg)" stroke="#8a8a8a" stroke-width="1.100"/><path d="M9.600 8.300V18.400M1.200 11H9.600" stroke="#a0a0a6" stroke-width="0.900" fill="none"/></svg>
<div class="row" style="left:67.1px;top:68px;width:154.5px;height:22px"></div><div class="abs rtxt" style="left:100.5px;top:71px;color:#3a3a3a;">Document Settings</div>
<svg class="abs" style="left:47px;top:73px" width="9" height="12" viewBox="0 0 9 12"><path d="M0.800 0.800L7 6L0.800 11.200z" fill="#fff" stroke="#4c4c4c" stroke-width="1" stroke-linejoin="round"/></svg>
<svg class="abs" style="left:70px;top:71px" width="16" height="16" viewBox="-8 -8 16 16"><g fill="#6a6a6a"><circle r="5.200"/><rect x="-1.500" y="-7.600" width="3" height="4" transform="rotate(0)"/><rect x="-1.500" y="-7.600" width="3" height="4" transform="rotate(45)"/><rect x="-1.500" y="-7.600" width="3" height="4" transform="rotate(90)"/><rect x="-1.500" y="-7.600" width="3" height="4" transform="rotate(135)"/><rect x="-1.500" y="-7.600" width="3" height="4" transform="rotate(180)"/><rect x="-1.500" y="-7.600" width="3" height="4" transform="rotate(225)"/><rect x="-1.500" y="-7.600" width="3" height="4" transform="rotate(270)"/><rect x="-1.500" y="-7.600" width="3" height="4" transform="rotate(315)"/></g><circle r="2.200" fill="#f0f0f0"/></svg>
<div class="row" style="left:67.1px;top:95.69999999999999px;width:126.5px;height:22px"></div><div class="abs rtxt" style="left:105px;top:98.69999999999999px;color:#3a3a3a;">Named Views</div>
<svg class="abs" style="left:47px;top:100.69999999999999px" width="9" height="12" viewBox="0 0 9 12"><path d="M0.800 0.800L7 6L0.800 11.200z" fill="#fff" stroke="#4c4c4c" stroke-width="1" stroke-linejoin="round"/></svg>
<svg class="abs" style="left:69.9px;top:99.19999999999999px" width="19" height="15" viewBox="0 0 19 15"><path d="M0 0.600H6.200L7.800 2.400H18.600V14.600H0z" fill="#8e8e8e"/></svg>
<div class="row" style="left:67.1px;top:123.5px;width:114px;height:22px"></div><div class="abs rtxt" style="left:134.5px;top:126.5px;color:#3a3a3a;">Origin</div>
<svg class="abs" style="left:47px;top:128.5px" width="9" height="12" viewBox="0 0 9 12"><path d="M0.800 0.800L7 6L0.800 11.200z" fill="#fff" stroke="#4c4c4c" stroke-width="1" stroke-linejoin="round"/></svg>
<svg class="abs" style="left:70.2px;top:128.5px" width="19" height="12" viewBox="0 0 19 12"><path d="M0.500 6C3 1.800 6 0.500 9.500 0.500C13 0.500 16 1.800 18.500 6C16 10.200 13 11.500 9.500 11.500C6 11.500 3 10.200 0.500 6z" fill="#8e8e8e"/><circle cx="9.500" cy="6" r="4" fill="#f0f0f0"/><circle cx="9.500" cy="6" r="2.500" fill="#8e8e8e"/></svg>
<svg class="abs" style="left:98.9px;top:127.0px" width="19" height="15" viewBox="0 0 19 15"><path d="M0 0.600H6.200L7.800 2.400H18.600V14.600H0z" fill="#8e8e8e"/></svg>
<div class="row" style="left:67.1px;top:151.2px;width:161.5px;height:22px"></div><div class="abs rtxt" style="left:0px;top:154.2px;color:#3a3a3a;"></div>
<svg class="abs" style="left:46.7px;top:157.6px" width="10" height="10" viewBox="0 0 10 10"><path d="M8.600 0.800V8.200H0.800z" fill="#444" stroke="#222" stroke-width="0.800" stroke-linejoin="round"/></svg>
<svg class="abs" style="left:70.2px;top:156.2px" width="19" height="12" viewBox="0 0 19 12"><path d="M0.500 6C3 1.800 6 0.500 9.500 0.500C13 0.500 16 1.800 18.500 6C16 10.200 13 11.500 9.500 11.500C6 11.500 3 10.200 0.500 6z" fill="#8e8e8e"/><circle cx="9.500" cy="6" r="4" fill="#f0f0f0"/><circle cx="9.500" cy="6" r="2.500" fill="#8e8e8e"/></svg>
<div class="abs" style="left:96px;top:153px;width:104px;height:18px;background:#8d8d8d"></div>
<div class="abs rtxt" style="left:135px;top:153.500px;color:#fff;font-weight:bold;letter-spacing:-0.400px">Socket:1</div>
<svg class="abs" style="left:98px;top:152px" width="22" height="21" viewBox="0 0 22 21"><defs><linearGradient id="sck" x1="0" y1="0" x2="1" y2="1"><stop offset="0" stop-color="#fbfbfb"/><stop offset="1" stop-color="#d6d6d6"/></linearGradient></defs><path d="M4.800 7.200L7.600 4.300H18.600Q19.800 4.300 19.800 5.500V15.300L16.800 18.400H6Q4.800 18.400 4.800 17.200z" fill="url(#sck)" stroke="#6a6a6a" stroke-width="0.900"/><path d="M16.500 7.300L19.600 4.500V15.200L16.500 18.200z" fill="#c4c4c4"/><path d="M5.800 4.400V10.200M3.400 6h4.800M2 8Q2.600 10.600 5.800 10.600Q9 10.600 9.600 8" fill="none" stroke="#2a2a2a" stroke-width="1.200"/><circle cx="5.800" cy="3" r="1.300" fill="none" stroke="#2a2a2a" stroke-width="1.100"/></svg>
<svg class="abs" style="left:204px;top:153.500px" width="18" height="18" viewBox="0 0 18 18"><circle cx="8.800" cy="8.600" r="7.100" fill="#fff" stroke="#a2a6b4" stroke-width="1.700"/><circle cx="8.800" cy="8.600" r="5.200" fill="none" stroke="#d8dae2" stroke-width="1"/><circle cx="8.800" cy="8.600" r="3.300" fill="#3a3a3a"/></svg>
<div class="row" style="left:87.6px;top:179.10000000000002px;width:114.5px;height:22px"></div><div class="abs rtxt" style="left:155px;top:182.10000000000002px;color:#3a3a3a;">Origin</div>
<svg class="abs" style="left:68px;top:184.10000000000002px" width="9" height="12" viewBox="0 0 9 12"><path d="M0.800 0.800L7 6L0.800 11.200z" fill="#fff" stroke="#4c4c4c" stroke-width="1" stroke-linejoin="round"/></svg>
<svg class="abs" style="left:90.7px;top:183.10000000000002px" width="19" height="14" viewBox="0 0 19 14"><path d="M0.800 7C3 2.800 6 1.500 9.500 1.500C13 1.500 16 2.800 18.200 7C16 11.200 13 12.500 9.500 12.500C6 12.500 3 11.200 0.800 7z" fill="none" stroke="#9a9a9a" stroke-width="1.100"/><circle cx="9.500" cy="7" r="3" fill="none" stroke="#9a9a9a" stroke-width="1.100"/><path d="M3.500 1L15.500 13" stroke="#f0f0f0" stroke-width="2.600"/><path d="M3.500 1L15.500 13" stroke="#9a9a9a" stroke-width="1.100"/></svg>
<svg class="abs" style="left:119.9px;top:182.60000000000002px" width="19" height="15" viewBox="0 0 19 15"><path d="M0 0.600H6.200L7.800 2.400H18.600V14.600H0z" fill="#8e8e8e"/></svg>
<div class="row" style="left:87.6px;top:206.8px;width:119.5px;height:22px"></div><div class="abs rtxt" style="left:155px;top:209.8px;color:#3a3a3a;">Bodies</div>
<svg class="abs" style="left:68px;top:211.8px" width="9" height="12" viewBox="0 0 9 12"><path d="M0.800 0.800L7 6L0.800 11.200z" fill="#fff" stroke="#4c4c4c" stroke-width="1" stroke-linejoin="round"/></svg>
<svg class="abs" style="left:90.7px;top:211.8px" width="19" height="12" viewBox="0 0 19 12"><path d="M0.500 6C3 1.800 6 0.500 9.500 0.500C13 0.500 16 1.800 18.500 6C16 10.200 13 11.500 9.500 11.500C6 11.500 3 10.200 0.500 6z" fill="#8e8e8e"/><circle cx="9.500" cy="6" r="4" fill="#f0f0f0"/><circle cx="9.500" cy="6" r="2.500" fill="#8e8e8e"/></svg>
<svg class="abs" style="left:119.9px;top:210.3px" width="19" height="15" viewBox="0 0 19 15"><path d="M0 0.600H6.200L7.800 2.400H18.600V14.600H0z" fill="#8e8e8e"/></svg>
<div class="row" style="left:87.6px;top:234.60000000000002px;width:133px;height:22px"></div><div class="abs rtxt" style="left:155px;top:237.60000000000002px;color:#3a3a3a;">Sketches</div>
<svg class="abs" style="left:68px;top:239.60000000000002px" width="9" height="12" viewBox="0 0 9 12"><path d="M0.800 0.800L7 6L0.800 11.200z" fill="#fff" stroke="#4c4c4c" stroke-width="1" stroke-linejoin="round"/></svg>
<svg class="abs" style="left:90.7px;top:239.60000000000002px" width="19" height="12" viewBox="0 0 19 12"><path d="M0.500 6C3 1.800 6 0.500 9.500 0.500C13 0.500 16 1.800 18.500 6C16 10.200 13 11.500 9.500 11.500C6 11.500 3 10.200 0.500 6z" fill="#8e8e8e"/><circle cx="9.500" cy="6" r="4" fill="#f0f0f0"/><circle cx="9.500" cy="6" r="2.500" fill="#8e8e8e"/></svg>
<svg class="abs" style="left:119.9px;top:238.10000000000002px" width="19" height="15" viewBox="0 0 19 15"><path d="M0 0.600H6.200L7.800 2.400H18.600V14.600H0z" fill="#8e8e8e"/></svg>
<div class="row" style="left:87.6px;top:262.4px;width:151.5px;height:22px"></div><div class="abs rtxt" style="left:155px;top:265.4px;color:#3a3a3a;">Construction</div>
<svg class="abs" style="left:68px;top:267.4px" width="9" height="12" viewBox="0 0 9 12"><path d="M0.800 0.800L7 6L0.800 11.200z" fill="#fff" stroke="#4c4c4c" stroke-width="1" stroke-linejoin="round"/></svg>
<svg class="abs" style="left:90.7px;top:267.4px" width="19" height="12" viewBox="0 0 19 12"><path d="M0.500 6C3 1.800 6 0.500 9.500 0.500C13 0.500 16 1.800 18.500 6C16 10.200 13 11.500 9.500 11.500C6 11.500 3 10.200 0.500 6z" fill="#8e8e8e"/><circle cx="9.500" cy="6" r="4" fill="#f0f0f0"/><circle cx="9.500" cy="6" r="2.500" fill="#8e8e8e"/></svg>
<svg class="abs" style="left:119.9px;top:265.9px" width="19" height="15" viewBox="0 0 19 15"><path d="M0 0.600H6.200L7.800 2.400H18.600V14.600H0z" fill="#8e8e8e"/></svg>
<!-- /BROWSER -->
<!-- OVERLAYS -->
<!-- banner -->
<div class="abs" style="left:736px;top:5px;width:307px;height:27.500px;background:#f0f0f0"></div>
<svg class="abs" style="left:739px;top:10px" width="21" height="18" viewBox="0 0 21 18"><path d="M10.400 1.200L19.800 16.600H1z" fill="#f5a21e" stroke="#f5a21e" stroke-width="1.400" stroke-linejoin="round"/><path d="M10.400 6v6" stroke="#fff" stroke-width="2" stroke-linecap="round"/><circle cx="10.400" cy="14.600" r="1.100" fill="#fff"/></svg>
<div class="abs btxt" style="left:765px;font-weight:bold;color:#333;letter-spacing:-0.250px">Unsaved:</div>
<div class="abs btxt" style="left:846px;color:#444">Changes may be lost</div>
<div class="abs" style="left:984.500px;top:5px;width:1px;height:27px;background:#cfcfcf"></div>
<div class="abs btxt" style="left:1000px;color:#2a6cb6">Save</div>
<!-- viewcube -->
<svg class="abs" style="left:1660px;top:8px" width="118" height="118" viewBox="1660 170 118 118">
<defs><radialGradient id="vsh" cx="0.500" cy="0.500" r="0.500"><stop offset="0" stop-color="#000" stop-opacity="0.220"/><stop offset="0.600" stop-color="#000" stop-opacity="0.100"/><stop offset="1" stop-color="#000" stop-opacity="0"/></radialGradient></defs>
<ellipse cx="1723" cy="247" rx="41" ry="25" fill="url(#vsh)"/>
<path d="M1686.900 201.900L1719.400 187.500L1751.600 201.900L1719.400 219.600z" fill="#ececee"/>
<path d="M1686.900 201.900L1719.400 219.600V258.100L1689.400 238.100z" fill="#e3e4e6"/>
<path d="M1719.400 219.600L1751.600 201.900L1748.800 236.900L1719.400 258.100z" fill="#dcdde0"/>
<path d="M1686.900 201.900L1719.400 187.500L1751.600 201.900L1748.800 236.900L1719.400 258.100L1689.400 238.100zM1686.900 201.900L1719.400 219.600L1751.600 201.900M1719.400 219.600V258.100" fill="none" stroke="#a4a4a6" stroke-width="0.900" stroke-linejoin="round"/>
<path d="M1685 195.600L1690 238.100" stroke="#4f4fe8" stroke-width="2.200"/>
<path d="M1690 238.100L1725 263.800" stroke="#e88a8a" stroke-width="2.200"/>
<text x="1680.500" y="192.800" font-family="Liberation Sans" font-size="12.500" fill="#7a7cf8">Z</text>
<text x="1725.500" y="271.500" font-family="Liberation Sans" font-size="12.500" fill="#f47c7c">X</text>
<text transform="matrix(0.85 0.42 -0.75 0.36 1713.500 198.500)" font-family="Liberation Sans" font-size="8.500" fill="#949aa2" stroke="#949aa2" stroke-width="0.200">TOP</text>
<text transform="matrix(0.80 0.52 0 1 1693.500 220.500)" font-family="Liberation Sans" font-size="8" fill="#8e949c" stroke="#8e949c" stroke-width="0.250" letter-spacing="-0.300">FRONT</text>
<text transform="matrix(0.78 -0.50 0 1 1726 238.500)" font-family="Liberation Sans" font-size="8" font-style="italic" fill="#8e949c" stroke="#8e949c" stroke-width="0.250" letter-spacing="-0.200">RIGHT</text>
</svg>
<!-- comments -->
<div class="panelhdr" style="top:746px;border-top:none;height:28px"></div>
<div class="abs" style="left:33.500px;top:752.500px;font-size:13px;color:#585858;letter-spacing:-0.200px">COMMENTS</div>
<svg class="abs" style="left:327px;top:755px" width="12" height="12" viewBox="0 0 12 12"><circle cx="6" cy="5.800" r="5.300" fill="#333"/><path d="M3 5.800h6M6 2.800v6" stroke="#fff" stroke-width="1.500"/></svg>
<!-- nav bar -->
<div class="abs" style="left:753px;top:745px;width:274.500px;height:28px;background:#f0f0f0"></div>
<svg class="abs" style="left:753px;top:745px" width="275" height="28" viewBox="753 907 275 28">
<defs><linearGradient id="nvg" x1="0" y1="0" x2="0" y2="1"><stop offset="0" stop-color="#fff"/><stop offset="1" stop-color="#a4a8b2"/></linearGradient>
<linearGradient id="nvb" x1="0" y1="0" x2="0" y2="1"><stop offset="0" stop-color="#a9c0e6"/><stop offset="1" stop-color="#7f9fd2"/></linearGradient></defs>
<g fill="#222"><path d="M780.900 919.400h6l-3 4.600z"/><path d="M908.700 919.400h6.300l-3.150 4.600z"/><path d="M944 919.400h6l-3 4.600z"/><path d="M979.600 919.400h6.300l-3.150 4.600z"/><path d="M1015 919.400h6.300l-3.150 4.600z"/></g>
<!-- orbit -->
<ellipse cx="765.400" cy="923.200" rx="8.300" ry="3.600" fill="none" stroke="#444" stroke-width="1.100"/>
<path d="M763.600 929.500V917.500H761L765.400 912L769.800 917.500H767.200V929.500z" fill="#f6f6f6" stroke="#444" stroke-width="1"/>
<path d="M757.500 924.600L761.500 923L760.500 926.800z" fill="#333"/>
<!-- look at -->
<path d="M795.800 918.500L801 914L803 916.200L806.500 914.500L808.500 918.500z" fill="#888" stroke="#555" stroke-width="0.700"/>
<rect x="795.400" y="918.200" width="15.400" height="10.800" rx="1.200" fill="#dcdde2" stroke="#888" stroke-width="1"/>
<rect x="797.600" y="921" width="11" height="6" fill="url(#nvg)" stroke="#555" stroke-width="0.700"/>
<!-- hand -->
<path d="M828.500 922.500C827 920.500 825.800 919.800 825 920.600C824.300 921.500 826 923.500 828 926.500C829.500 928.800 831.500 929.500 834.500 929.500C838 929.500 839.500 927.500 840 924.500L841.600 917.500C841.800 916.300 840.200 916 839.800 917.200L838.800 920.500L838.600 914.500C838.600 913.200 836.800 913.200 836.800 914.500L836.400 919.800L835.400 913.200C835.200 912 833.500 912.200 833.600 913.500L834 919.800L832.200 914.200C831.800 913 830.200 913.500 830.500 914.800L832 921.500z" fill="#fff" stroke="#555" stroke-width="0.900" stroke-linejoin="round"/>
<!-- zoom -->
<path d="M865.500 924.500L871.200 929" stroke="#333" stroke-width="2.400" stroke-linecap="round"/>
<circle cx="861" cy="918.800" r="6.200" fill="#eef4f6" stroke="#555" stroke-width="1.100"/>
<path d="M870.500 913.200v3.400M868.800 914.900h3.400M868.800 918.400h3.400" stroke="#444" stroke-width="0.900"/>
<!-- zoom fit -->
<path d="M896 925.200L901.500 929.300" stroke="#333" stroke-width="2.400" stroke-linecap="round"/>
<circle cx="891.400" cy="919.600" r="6.600" fill="#e6eeee" stroke="#666" stroke-width="1.100"/>
<rect x="888.200" y="916.600" width="6.600" height="6" fill="#f4f4f6" stroke="#777" stroke-width="0.900"/>
<!-- display -->
<rect x="923.500" y="912.400" width="17" height="14.400" rx="1" fill="#e2e2e4" stroke="#8a8a8a" stroke-width="1"/>
<rect x="925.600" y="914.400" width="12.800" height="10" fill="url(#nvb)" stroke="#3f5f94" stroke-width="0.900"/>
<path d="M929.500 927.200h5l1 2h-7z" fill="#bbb"/><rect x="927" y="928.800" width="10" height="1.400" rx="0.700" fill="#8a8a8a"/>
<!-- grid -->
<rect x="958.800" y="913.200" width="17" height="16.200" fill="url(#nvg)"/>
<path d="M958.800 913.200v16.200M962.200 913.200v16.200M965.600 913.200v16.200M969 913.200v16.200M972.400 913.200v16.200M975.800 913.200v16.200M958.800 913.200h17M958.800 916.400h17M958.800 919.700h17M958.800 922.900h17M958.800 926.200h17M958.800 929.400h17" stroke="#555" stroke-width="0.700" fill="none"/>
<!-- viewports -->
<rect x="994.600" y="914.200" width="16.900" height="14.500" rx="1.200" fill="url(#nvb)" stroke="#3f5f94" stroke-width="1"/>
<path d="M1003.050 914.200v14.500" stroke="#3f5f94" stroke-width="1"/><path d="M995 921.300h16" stroke="#b8ccec" stroke-width="0.800"/>
</svg>

<!-- /OVERLAYS -->
</div>
<div id="timeline">
<div class="abs" style="left:0;top:-1px;width:155px;height:1px;background:#cfcfcf"></div><div class="abs" style="left:1726px;top:-1.500px;width:52px;height:2px;background:#d9d9d9"></div>
<svg class="abs" style="left:0;top:0" width="1778" height="54" viewBox="0 944 1778 54">
<g fill="#666">
<rect x="12.100" y="964" width="2.600" height="14"/><path d="M25.400 964V978L14.700 971z"/>
<path d="M53.200 964.300V978L41.300 971.200z"/><rect x="54.400" y="968.500" width="1.600" height="6.100"/>
<path d="M70.600 962.500V979.200L84.700 970.800z"/>
<rect x="98.400" y="968.500" width="1.700" height="6.100"/><path d="M101.400 964.300V978L113.100 971.200z"/>
<path d="M128 964V978L139 971z"/><rect x="139" y="964" width="2.300" height="14"/>
</g>
<!-- bracket -->
<path d="M170.400 989.500H235M179.600 983.300V989.500M206 983.300V989.500M233.900 983.300V989.500" stroke="#c2c2c2" stroke-width="1.400" fill="none"/>
<!-- cylinder feature -->
<path d="M169.800 965.200V975.800A8.850 3.400 0 0 0 187.500 975.800V965.200z" fill="#70b0e6"/><ellipse cx="178.650" cy="965.200" rx="8.850" ry="3.500" fill="#8cc6f6"/>
<!-- pipe + plane -->
<path d="M200.500 970.500L209 964.500L212.500 971L204.500 978.800z" fill="#5cb86c"/>
<path d="M206.800 966.800L216.300 962V973.200L206.800 978.600z" fill="#d99a55" fill-opacity="0.850" stroke="#c88a48" stroke-width="0.500"/>
<ellipse cx="201.800" cy="975" rx="3.800" ry="4" fill="#f4fff4" stroke="#5cb86c" stroke-width="1.300" transform="rotate(35 201.800 975)"/>
<!-- sketch feature -->
<path d="M225.500 962.200H241.500M225.500 962.200V978M241.500 962.200V969M225.500 978H236" stroke="#aaa" stroke-width="0.900" fill="none" stroke-dasharray="1.200 1"/>
<path d="M229.500 966.200h7.500M229.500 966.200v8.500M237.500 966.500A8.500 8.500 0 0 1 229.800 974.500" stroke="#666" stroke-width="0.900" fill="none"/>
<g fill="#3a8ee8"><rect x="224.600" y="961.300" width="1.800" height="1.800"/><rect x="240.600" y="961.300" width="1.800" height="1.800"/><rect x="224.600" y="977.100" width="1.800" height="1.800"/><rect x="228.600" y="965.300" width="1.600" height="1.600"/><rect x="236.400" y="965.300" width="1.600" height="1.600"/></g>
<path d="M234.500 978.500L235.300 975.500L240.500 970.300L242.800 972.600L237.600 977.800z" fill="#f0b84a"/><path d="M240.500 970.300L241.700 969.100A1.600 1.600 0 0 1 244 971.400L242.800 972.600z" fill="#e8443a"/><path d="M234.500 978.500L235.300 975.500L237.600 977.800z" fill="#555"/>
<!-- marker -->
<path d="M241 953.700H255.100V957.200L249.800 962.800V990.400H246.300V962.800L241 957.200z" fill="#555"/>
<!-- gear -->
<g transform="translate(1753.300 970.700) scale(1.080)"><g fill="#7c7c7c"><circle r="5.700"/><rect x="-1.700" y="-8.050" width="3.400" height="4" transform="rotate(0)"/><rect x="-1.700" y="-8.050" width="3.400" height="4" transform="rotate(45)"/><rect x="-1.700" y="-8.050" width="3.400" height="4" transform="rotate(90)"/><rect x="-1.700" y="-8.050" width="3.400" height="4" transform="rotate(135)"/><rect x="-1.700" y="-8.050" width="3.400" height="4" transform="rotate(180)"/><rect x="-1.700" y="-8.050" width="3.400" height="4" transform="rotate(225)"/><rect x="-1.700" y="-8.050" width="3.400" height="4" transform="rotate(270)"/><rect x="-1.700" y="-8.050" width="3.400" height="4" transform="rotate(315)"/></g><circle r="2.800" fill="#f0f0f0"/></g>
</svg>
</div>

<div id="bottombar"><div class="abs" style="left:429px;top:0;width:41px;height:3px;background:linear-gradient(#a8a8a8,#7a7a7a)"></div></div>
</body></html>
